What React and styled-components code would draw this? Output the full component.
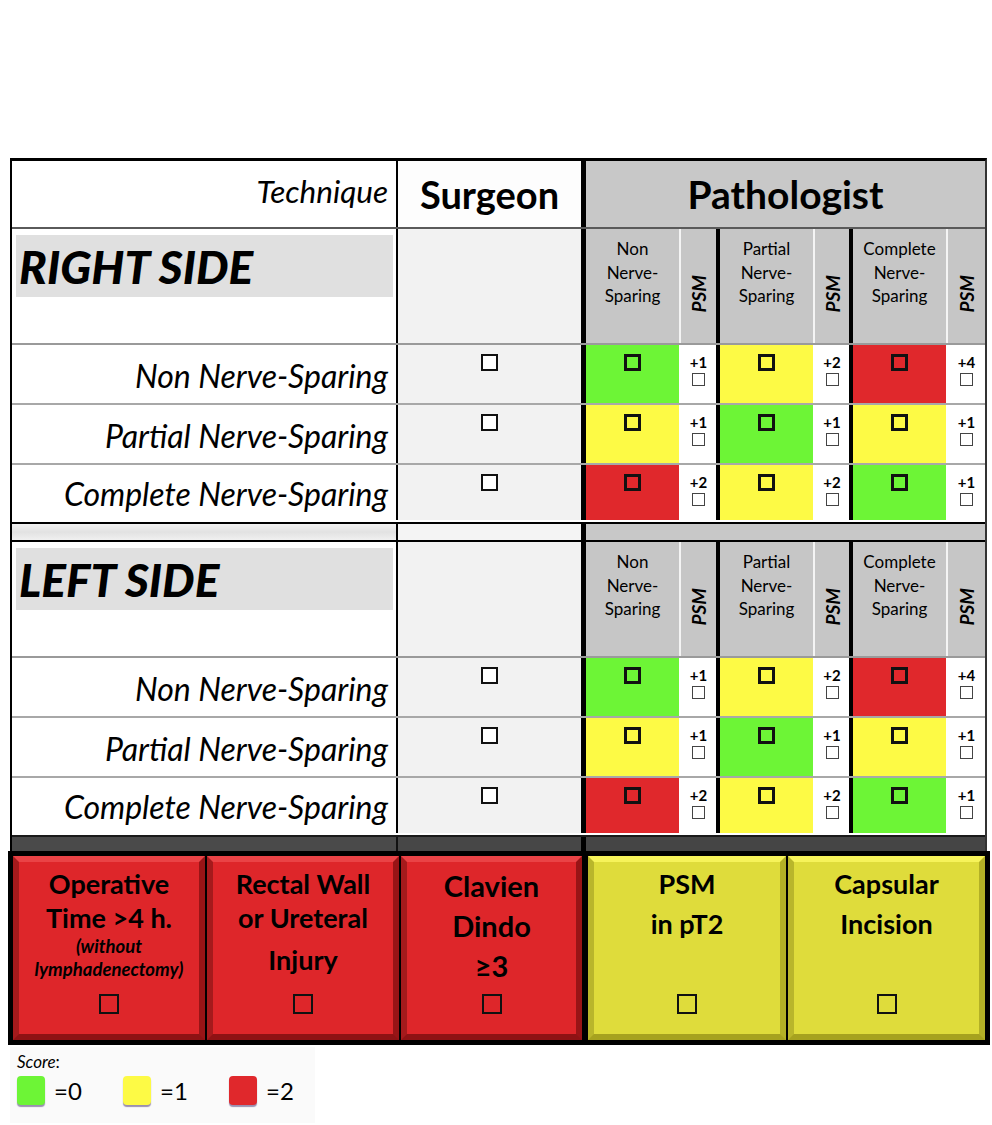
import styled, { createGlobalStyle } from "styled-components";

const GlobalStyle = createGlobalStyle`
  body {
    margin: 0;
    background: #fff;
    font-family: Lato, "Open Sans", sans-serif;
    color: #000;
  }
  * { box-sizing: border-box; }
`;

const COLORS = {
  green: "#6df536",
  yellow: "#fdfa45",
  red: "#e0282c",
};

const rows = [
  { label: "Non Nerve-Sparing", cells: [["green", "+1"], ["yellow", "+2"], ["red", "+4"]] },
  { label: "Partial Nerve-Sparing", cells: [["yellow", "+1"], ["green", "+1"], ["yellow", "+1"]] },
  { label: "Complete Nerve-Sparing", cells: [["red", "+2"], ["yellow", "+2"], ["green", "+1"]] },
];

const subHeads = [
  ["Non", "Nerve-", "Sparing"],
  ["Partial", "Nerve-", "Sparing"],
  ["Complete", "Nerve-", "Sparing"],
];

function SectionHead({ title }) {
  return (
    <Row $h={116} $line="#9a9a9a">
      <TechCell $top>
        <SideLabel>{title}</SideLabel>
      </TechCell>
      <SurgeonCell />
      <PathGrid>
        {subHeads.map((lines, i) => [
          <SubHead key={"h" + i}>
            {lines.map((l) => (
              <span key={l}>{l}</span>
            ))}
          </SubHead>,
          <PsmHead key={"p" + i} $last={i === 2}>
            <span>PSM</span>
          </PsmHead>,
        ])}
      </PathGrid>
    </Row>
  );
}

function DataRows() {
  return rows.map((r, idx) => (
    <Row key={r.label} $h={idx === 2 ? 57 : 60} $line={idx === 2 ? "transparent" : "#a8a8a8"}>
      <TechCell>
        <RowLabel>{r.label}</RowLabel>
      </TechCell>
      <SurgeonCell>
        <SurgeonBox />
      </SurgeonCell>
      <PathGrid>
        {r.cells.map(([c, psm], i) => [
          <ColorCell key={"c" + i} $color={COLORS[c]}>
            <ColorBox />
          </ColorCell>,
          <PsmCell key={"p" + i} $last={i === 2}>
            <b>{psm}</b>
            <PsmBox />
          </PsmCell>,
        ])}
      </PathGrid>
    </Row>
  ));
}

export default function App() {
  return (
    <Page>
      <GlobalStyle />
      <Table>
        <Row $h={68} $line="#5a5a5a">
          <TechCell>
            <HeadLabel>Technique</HeadLabel>
          </TechCell>
          <SurgeonHead>Surgeon</SurgeonHead>
          <PathHead>Pathologist</PathHead>
        </Row>
        <SectionHead title="RIGHT SIDE" />
        <DataRows />
        <Band>
          <BandTech />
          <BandSurgeon />
          <BandPath />
        </Band>
        <SectionHead title="LEFT SIDE" />
        <DataRows />
        <DarkBand>
          <DarkTech />
          <DarkSurgeon />
          <DarkPath />
        </DarkBand>
      </Table>
      <Panel>
        <BoxGroup>
          <Tile $w={192} $kind="red">
            <TileLines $lh={34} $shift={-3}>
              <span>Operative</span>
              <span>Time &gt;4 h.</span>
            </TileLines>
            <Note>
              (without
              <br />
              lymphadenectomy)
            </Note>
            <TileBox />
          </Tile>
          <Tile $w={192} $kind="red">
            <TileLines $lh={34} $shift={-3}>
              <span>Rectal Wall</span>
              <span>or Ureteral</span>
              <span style={{ marginTop: 8 }}>Injury</span>
            </TileLines>
            <TileBox />
          </Tile>
          <Tile $w={181} $kind="red">
            <TileLines $lh={40} $shift={-4} $size={29}>
              <span>Clavien</span>
              <span>Dindo</span>
              <span>≥3</span>
            </TileLines>
            <TileBox />
          </Tile>
        </BoxGroup>
        <BoxGroup>
          <Tile $w={198} $kind="yellow">
            <TileLines $lh={40} $shift={-6}>
              <span>PSM</span>
              <span>in pT2</span>
            </TileLines>
            <TileBox />
          </Tile>
          <Tile $w={197} $kind="yellow">
            <TileLines $lh={40} $shift={-6}>
              <span>Capsular</span>
              <span>Incision</span>
            </TileLines>
            <TileBox />
          </Tile>
        </BoxGroup>
      </Panel>
      <Legend>
        <ScoreTitle>
          <i>Score</i>:
        </ScoreTitle>
        <LegendRow>
          <LegendItem>
            <Swatch $color={COLORS.green} />
            =0
          </LegendItem>
          <LegendItem>
            <Swatch $color={COLORS.yellow} />
            =1
          </LegendItem>
          <LegendItem>
            <Swatch $color={COLORS.red} />
            =2
          </LegendItem>
        </LegendRow>
      </Legend>
    </Page>
  );
}

const Page = styled.div`
  width: 992px;
  height: 1125px;
  padding-top: 158px;
  overflow: hidden;
`;

const Table = styled.div`
  margin-left: 10px;
  width: 977px;
  border-top: 3px solid #000;
  border-left: 2px solid #000;
  border-right: 2px solid #333;
`;

const Row = styled.div`
  display: flex;
  height: ${(p) => p.$h}px;
  border-bottom: 2px solid ${(p) => p.$line};
`;

const TechCell = styled.div`
  width: 386px;
  flex: none;
  background: #fff;
  border-right: 2px solid #000;
  display: flex;
  justify-content: flex-end;
  align-items: ${(p) => (p.$top ? "flex-start" : "center")};
  padding: ${(p) => (p.$top ? "6px 3px 0 4px" : "2px 8px 0 0")};
`;

const HeadLabel = styled.span`
  font-style: italic;
  font-size: 31.5px;
  margin-bottom: 8px;
`;

const RowLabel = styled.span`
  font-style: italic;
  font-size: 32px;
`;

const SideLabel = styled.div`
  width: 100%;
  height: 62px;
  background: #e0e0e0;
  display: flex;
  align-items: center;
  padding-left: 3px;
  font-weight: 900;
  font-style: italic;
  font-size: 46px;
`;

const SurgeonCell = styled.div`
  width: 183px;
  flex: none;
  background: #f2f2f2;
  display: flex;
  justify-content: center;
  align-items: flex-start;
  padding-top: 9px;
`;

const SurgeonHead = styled(SurgeonCell)`
  background: #fdfdfd;
  align-items: center;
  padding-top: 0;
  font-weight: 700;
  font-size: 38px;
`;

const PathHead = styled.div`
  flex: 1;
  background: #c8c8c8;
  border-left: 5px solid #000;
  display: flex;
  justify-content: center;
  align-items: center;
  font-weight: 700;
  font-size: 39px;
`;

const PathGrid = styled.div`
  flex: 1;
  border-left: 5px solid #000;
  display: grid;
  grid-template-columns: 95px 39px 95px 38px 95px 37px;
`;

const SubHead = styled.div`
  background: #c6c6c6;
  border-right: 2px solid #f4f4f4;
  display: flex;
  flex-direction: column;
  align-items: center;
  padding-top: 8px;
  font-size: 17px;
  line-height: 23.5px;
  color: #000;
`;

const PsmHead = styled.div`
  background: #c6c6c6;
  border-right: ${(p) => (p.$last ? "none" : "4px solid #000")};
  display: flex;
  justify-content: center;
  align-items: center;
  padding-top: 16px;

  span {
    writing-mode: vertical-rl;
    transform: rotate(180deg);
    font-weight: 700;
    font-style: italic;
    font-size: 19px;
  }
`;

const ColorCell = styled.div`
  background: ${(p) => p.$color};
  border-right: 2px solid #fff;
  display: flex;
  justify-content: center;
  align-items: flex-start;
  padding-top: 9px;
`;

const ColorBox = styled.div`
  width: 17px;
  height: 17px;
  border: 3px solid #111;
`;

const SurgeonBox = styled.div`
  width: 17px;
  height: 17px;
  border: 2px solid #111;
  background: #fff;
`;

const PsmCell = styled.div`
  background: #fff;
  border-right: ${(p) => (p.$last ? "none" : "4px solid #000")};
  display: flex;
  flex-direction: column;
  align-items: center;
  padding-top: 9px;
  gap: 2px;

  b {
    font-size: 15px;
    line-height: 17px;
  }
`;

const PsmBox = styled.div`
  width: 13px;
  height: 13px;
  border: 1.5px solid #444;
  background: #fff;
`;

const Band = styled.div`
  display: flex;
  height: 20px;
  border-top: 2px solid #000;
  border-bottom: 2px solid #000;
`;

const BandTech = styled.div`
  width: 386px;
  background: linear-gradient(#f2f2f2, #e2e2e2 50%, #f0f0f0);
  border-right: 2px solid #000;
`;

const BandSurgeon = styled.div`
  width: 183px;
  background: #f4f4f4;
`;

const BandPath = styled.div`
  flex: 1;
  background: #c8c8c8;
  border-left: 5px solid #000;
`;

const DarkBand = styled.div`
  display: flex;
  height: 16px;
  border-top: 2px solid #1a1a1a;
`;

const DarkTech = styled.div`
  width: 386px;
  background: #4a4a4a;
  border-right: 2px solid #111;
`;

const DarkSurgeon = styled.div`
  width: 183px;
  background: #474747;
`;

const DarkPath = styled.div`
  flex: 1;
  background: #454545;
  border-left: 5px solid #000;
`;

const Panel = styled.div`
  margin-left: 8px;
  width: 982px;
  height: 194px;
  background: #000;
  border: 5px solid #000;
  display: flex;
  gap: 6px;
`;

const BoxGroup = styled.div`
  display: flex;
  gap: 2px;
`;

const BEVEL = {
  red: {
    face: "#de262a",
    colors: "#ea4346 #981416 #8e1214 #a51a1c",
  },
  yellow: {
    face: "#dfdc3b",
    colors: "#f6f35a #b3b026 #a6a21f #b9b62b",
  },
};

const Tile = styled.div`
  width: ${(p) => p.$w}px;
  height: 100%;
  background: ${(p) => BEVEL[p.$kind].face};
  border: 6px solid;
  border-color: ${(p) => BEVEL[p.$kind].colors};
  display: flex;
  flex-direction: column;
  align-items: center;
  padding-top: 8px;
  text-align: center;
`;

const TileLines = styled.div`
  display: flex;
  flex-direction: column;
  align-items: center;
  font-weight: 700;
  font-size: ${(p) => p.$size || 27}px;
  line-height: ${(p) => p.$lh}px;
  margin-top: ${(p) => p.$shift}px;
  white-space: nowrap;
`;

const Note = styled.div`
  font-weight: 700;
  font-style: italic;
  font-size: 18.5px;
  line-height: 23px;
  margin-top: 0;
  white-space: nowrap;
`;

const TileBox = styled.div`
  width: 20px;
  height: 20px;
  border: 2px solid #111;
  margin-top: auto;
  margin-bottom: 20px;
`;

const Legend = styled.div`
  margin: 2px 0 0 10px;
  width: 305px;
  height: 76px;
  background: #fafafa;
  padding: 5px 0 0 7px;
`;

const ScoreTitle = styled.div`
  font-size: 17px;
  line-height: 20px;
`;

const LegendRow = styled.div`
  display: flex;
  margin-top: 4px;
`;

const LegendItem = styled.div`
  width: 106px;
  flex: none;
  display: flex;
  align-items: center;
  gap: 9px;
  font-size: 24px;
`;

const Swatch = styled.div`
  width: 28px;
  height: 29px;
  border-radius: 4px;
  background: ${(p) => p.$color};
  box-shadow: 0 2px 1px #9a8fb0;
`;
